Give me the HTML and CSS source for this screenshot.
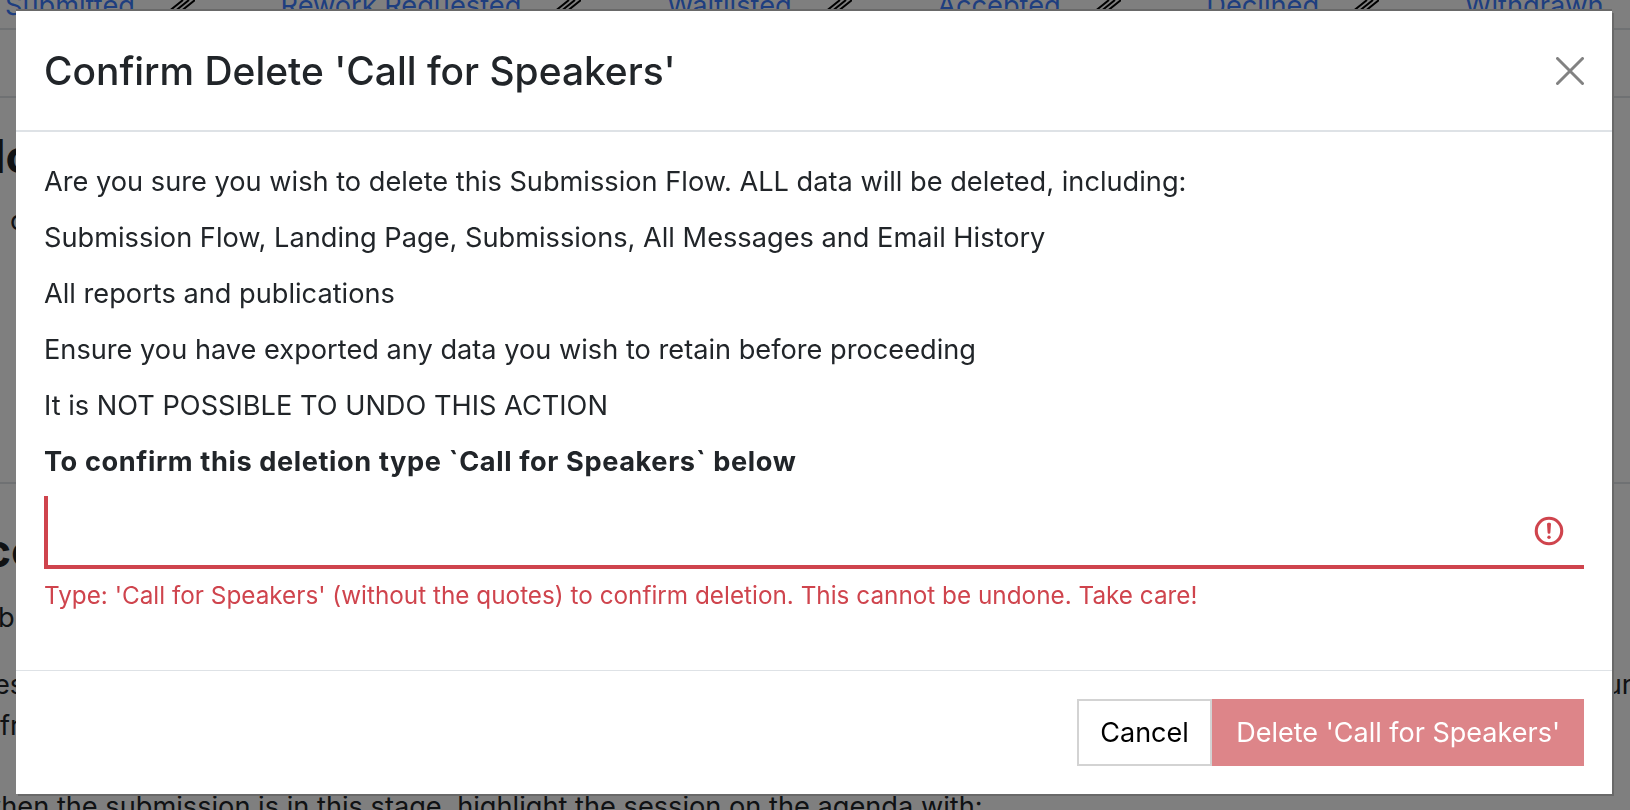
FILE: index.html
```html
<!DOCTYPE html>
<html lang="en">
<head>
<meta charset="utf-8">
<title>Confirm Delete</title>
<link rel="stylesheet" href="styles.css">
</head>
<body>
<div class="page">
  <nav class="tabs">
    <a class="tab">Submitted</a>
    <svg class="sep" viewBox="0 0 27 12"><path d="M0 12 15 0M6 12 21 0M12 12 27 0"/></svg>
    <a class="tab">Rework Requested</a>
    <svg class="sep" viewBox="0 0 27 12"><path d="M0 12 15 0M6 12 21 0M12 12 27 0"/></svg>
    <a class="tab">Waitlisted</a>
    <svg class="sep" viewBox="0 0 27 12"><path d="M0 12 15 0M6 12 21 0M12 12 27 0"/></svg>
    <a class="tab">Accepted</a>
    <svg class="sep" viewBox="0 0 27 12"><path d="M0 12 15 0M6 12 21 0M12 12 27 0"/></svg>
    <a class="tab">Declined</a>
    <svg class="sep" viewBox="0 0 27 12"><path d="M0 12 15 0M6 12 21 0M12 12 27 0"/></svg>
    <a class="tab">Withdrawn</a>
  </nav>
  <div class="bar"></div>
  <section class="sec-one">
    <h3 class="bg-head one">lc</h3>
    <p class="bg-line c">c</p>
  </section>
  <section class="sec-two">
    <h3 class="bg-head two">cc</h3>
    <p class="bg-line b">b</p>
    <p class="bg-line es"><span>es</span><span>ur</span></p>
    <p class="bg-line fr">fr</p>
    <p class="bg-line when">when the submission is in this stage, highlight the session on the agenda with:</p>
  </section>
</div>
<div class="backdrop"></div>
<div class="modal">
  <header class="modal-head">
    <h2 class="modal-title">Confirm Delete 'Call for Speakers'</h2>
    <svg class="close" viewBox="0 0 28 28"><path d="M1.5 1.5 26.5 26.5M26.5 1.5 1.5 26.5"/></svg>
  </header>
  <div class="modal-body">
    <p>Are you sure you wish to delete this Submission Flow. ALL data will be deleted, including:</p>
    <p>Submission Flow, Landing Page, Submissions, All Messages and Email History</p>
    <p>All reports and publications</p>
    <p>Ensure you have exported any data you wish to retain before proceeding</p>
    <p>It is NOT POSSIBLE TO UNDO THIS ACTION</p>
    <p class="strong">To confirm this deletion type `Call for Speakers` below</p>
    <div class="field">
      <input class="field-input" type="text">
      <svg class="alert" viewBox="0 0 12 12"><circle class="ring" cx="6" cy="6" r="4.5"/><path class="bang" d="M5.8 3.6h.4L6 6.5z"/><circle class="dot" cx="6" cy="8.2" r=".6"/></svg>
    </div>
    <div class="error">Type: 'Call for Speakers' (without the quotes) to confirm deletion. This cannot be undone. Take care!</div>
  </div>
  <footer class="modal-foot">
    <button class="btn cancel">Cancel</button>
    <button class="btn del">Delete 'Call for Speakers'</button>
  </footer>
</div>
</body>
</html>
```
FILE: styles.css
```css
html,body{margin:0;height:100%;overflow:hidden}
body{background:#fff;font-family:Inter,sans-serif;color:#212529;font-size:27.2px;line-height:40px}

/* page behind the dialog */
.page{height:810px;overflow:hidden}
.tabs{display:flex;height:28px;border-bottom:2px solid #dee2e6;padding-left:5px}
.tab{color:#3c7cff;margin:-14px 33px 0 0;white-space:nowrap}
.sep{width:27px;height:12px;margin-right:85.6px;flex:none}
.sep path{stroke:#000;stroke-width:2;fill:none}
.bar{height:66px;border-bottom:2px solid #dee2e6}
.sec-one{padding-top:38px;height:346px;border-bottom:2px solid #dee2e6}
.sec-two{padding-top:46px}
.bg-head{margin:0;font-size:46px;font-weight:700;line-height:40px}
.bg-head.one{margin-left:-7px}
.bg-head.two{margin-left:-16px}
.bg-line{margin:0;white-space:nowrap}
.c{margin:25px 0 0 10px}
.b{margin:28px 0 0 -2px}
.es{display:flex;justify-content:space-between;margin:27px 0 0 -6px;width:1638px}
.fr{margin:1px 0 0 0}
.when{margin:41px 0 0 -21px}

.backdrop{position:fixed;inset:0;background:rgba(0,0,0,.5)}

/* dialog */
.modal{position:fixed;top:11px;left:16px;width:1596px;height:783px;background:#fff;display:flex;flex-direction:column;box-shadow:2px 2px 0 #696969,0 -2px 0 #696969}
.modal-head{height:119px;flex:none;border-bottom:2px solid #dee2e6;padding:0 28px;display:flex;align-items:center;justify-content:space-between}
.modal-title{margin:0;font-size:38.9px;font-weight:500;line-height:48px}
.close{width:28px;height:28px}
.close path{stroke:#828282;stroke-width:3;stroke-linecap:round;fill:none}
.modal-body{flex:1;padding:30px 28px 0}
.modal-body p{margin:0 0 16px;line-height:40px}
.modal-body .strong{font-weight:700;margin-bottom:14px;letter-spacing:.6px}
.field{height:69px;border-left:4px solid #cf444d;border-bottom:4px solid #cf444d;display:flex;align-items:center;padding-right:18px}
.field-input{flex:1;border:0;outline:0;background:none;font:inherit;min-width:0}
.alert{width:34px;height:34px;flex:none}
.ring{fill:none;stroke:#cf444d;stroke-width:1.1}
.bang{fill:#cf444d;stroke:#cf444d;stroke-linejoin:round}
.dot{fill:#cf444d}
.error{color:#cf444d;font-size:24.3px;line-height:36px;margin-top:8px}
.modal-foot{height:123px;flex:none;border-top:1px solid #dee2e6;display:flex;justify-content:flex-end;align-items:center;padding:0 28px}
.btn{font:27px/40px Inter,sans-serif;height:67px;border:0;padding:0 24px;box-sizing:border-box;flex:none}
.cancel{background:#fff;border:2px solid #d3d3d3;color:#000;padding:0 21.5px}
.del{background:#dd8589;color:#fff}
```
